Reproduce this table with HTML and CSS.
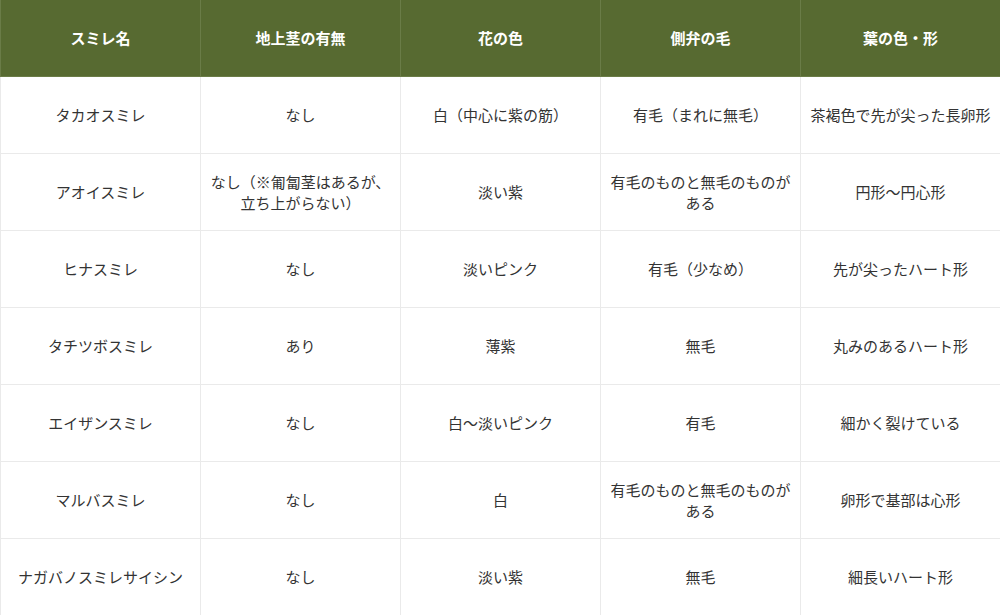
FILE: index.html
```html
<!DOCTYPE html>
<html lang="ja">
<head>
<meta charset="utf-8">
<link rel="stylesheet" href="styles.css">
</head>
<body>
<table class="violets">
  <thead>
    <tr>
      <th>スミレ名</th>
      <th>地上茎の有無</th>
      <th>花の色</th>
      <th>側弁の毛</th>
      <th>葉の色・形</th>
    </tr>
  </thead>
  <tbody>
    <tr><td>タカオスミレ</td><td>なし</td><td>白（中心に紫の筋）</td><td>有毛（まれに無毛）</td><td>茶褐色で先が尖った長卵形</td></tr>
    <tr><td>アオイスミレ</td><td>なし（※匍匐茎はあるが、立ち上がらない）</td><td>淡い紫</td><td>有毛のものと無毛のものがある</td><td>円形〜円心形</td></tr>
    <tr><td>ヒナスミレ</td><td>なし</td><td>淡いピンク</td><td>有毛（少なめ）</td><td>先が尖ったハート形</td></tr>
    <tr><td>タチツボスミレ</td><td>あり</td><td>薄紫</td><td>無毛</td><td>丸みのあるハート形</td></tr>
    <tr><td>エイザンスミレ</td><td>なし</td><td>白〜淡いピンク</td><td>有毛</td><td>細かく裂けている</td></tr>
    <tr><td>マルバスミレ</td><td>なし</td><td>白</td><td>有毛のものと無毛のものがある</td><td>卵形で基部は心形</td></tr>
    <tr><td>ナガバノスミレサイシン</td><td>なし</td><td>淡い紫</td><td>無毛</td><td>細長いハート形</td></tr>
  </tbody>
</table>
</body>
</html>
```
FILE: styles.css
```css
html, body {
  margin: 0;
  padding: 0;
  background: #ffffff;
}
body {
  font-family: "Noto Sans CJK JP", "Noto Sans", sans-serif;
  color: #333333;
}
.violets {
  width: 1000px;
  border-collapse: collapse;
  table-layout: fixed;
}
.violets th,
.violets td {
  width: 200px;
  padding: 0 8px;
  box-sizing: border-box;
  text-align: center;
  vertical-align: middle;
  font-size: 15px;
  line-height: 21px;
}
.violets th {
  background: #576a31;
  color: #ffffff;
  font-weight: bold;
  border: 1px solid #6a7c47;
  border-top: none;
  height: 76px;
}
.violets td {
  border: 1px solid #eaeaea;
  font-weight: normal;
  height: 77px;
}
```
